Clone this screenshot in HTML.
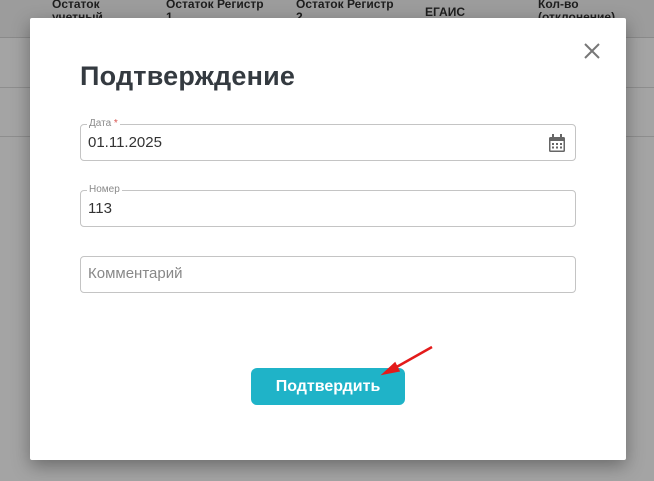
<!DOCTYPE html>
<html><head><meta charset="utf-8"><style>
*{box-sizing:border-box;margin:0;padding:0}
body{width:654px;height:481px;overflow:hidden;background:#a4a4a4;font-family:"Liberation Sans",sans-serif;position:relative}
.hdr{position:absolute;left:0;top:0;width:654px;height:38px;background:#9c9c9c;border-bottom:1px solid #8a8a8a}
.hl{position:absolute;left:0;width:654px;height:1px;background:#8e8e8e}
.ht{position:absolute;top:-2px;font-size:12px;font-weight:bold;color:#1e1e1e;line-height:13px}
.modal{position:absolute;left:30px;top:18px;width:596px;height:442px;background:#fff;box-shadow:0 6px 18px rgba(0,0,0,.35);border-radius:2px}
h1{position:absolute;left:50px;top:43px;font-size:27px;font-weight:bold;color:#343a40;letter-spacing:0.2px}
.x{position:absolute;left:553px;top:24px;width:18px;height:18px}
.f{position:absolute;left:50px;width:496px;height:37px;border:1px solid #c4c4c4;border-radius:4px}
.lab{position:absolute;left:6px;top:-7px;background:#fff;padding:0 2px;font-size:10px;color:#8a8a8a;line-height:12px}
.val{position:absolute;left:7px;top:9px;font-size:15px;color:#333}
.btn{position:absolute;left:221px;top:350px;width:154px;height:37px;background:#1fb3c8;border-radius:6px;color:#fff;font-weight:bold;font-size:16px;text-align:center;line-height:37px}
</style></head><body>
<div class="hdr"></div>
<div class="hl" style="top:87px"></div>
<div class="hl" style="top:136px"></div>
<div class="ht" style="left:52px">Остаток<br>учетный</div>
<div class="ht" style="left:166px">Остаток Регистр<br>1</div>
<div class="ht" style="left:296px">Остаток Регистр<br>2</div>
<div class="ht" style="left:425px;top:6px">ЕГАИС</div>
<div class="ht" style="left:538px">Кол-во<br>(отклонение)</div>
<div class="modal">
<h1>Подтверждение</h1>
<svg class="x" viewBox="0 0 18 18"><path d="M2 2L16 16M16 2L2 16" stroke="#777" stroke-width="2"/></svg>
<div class="f" style="top:106px"><div class="lab">Дата <span style="color:#d9534f">*</span></div><div class="val">01.11.2025</div>
<svg style="position:absolute;left:466px;top:8px" width="20" height="20" viewBox="0 0 20 20"><rect x="2" y="4" width="16" height="15" rx="1.5" fill="#666"/><rect x="5" y="1" width="2" height="5" fill="#666"/><rect x="13" y="1" width="2" height="5" fill="#666"/><rect x="3.5" y="8" width="13" height="9.5" fill="#fff"/><g fill="#666"><rect x="5" y="10" width="2" height="2"/><rect x="9" y="10" width="2" height="2"/><rect x="13" y="10" width="2" height="2"/><rect x="5" y="13.5" width="2" height="2"/><rect x="9" y="13.5" width="2" height="2"/><rect x="13" y="13.5" width="2" height="2"/></g></svg></div>
<div class="f" style="top:172px"><div class="lab">Номер</div><div class="val">113</div></div>
<div class="f" style="top:238px"><div class="val" style="color:#888;top:8px">Комментарий</div></div>
<div class="btn">Подтвердить</div>
<svg style="position:absolute;left:345px;top:326px" width="60" height="35" viewBox="0 0 60 35"><path d="M57 3L18 25" stroke="#e31b1b" stroke-width="2.5"/><path d="M8 30L20 19L24 27Z" fill="#e31b1b" stroke="#e31b1b" stroke-width="1.5"/></svg>
</div>
</body></html>
